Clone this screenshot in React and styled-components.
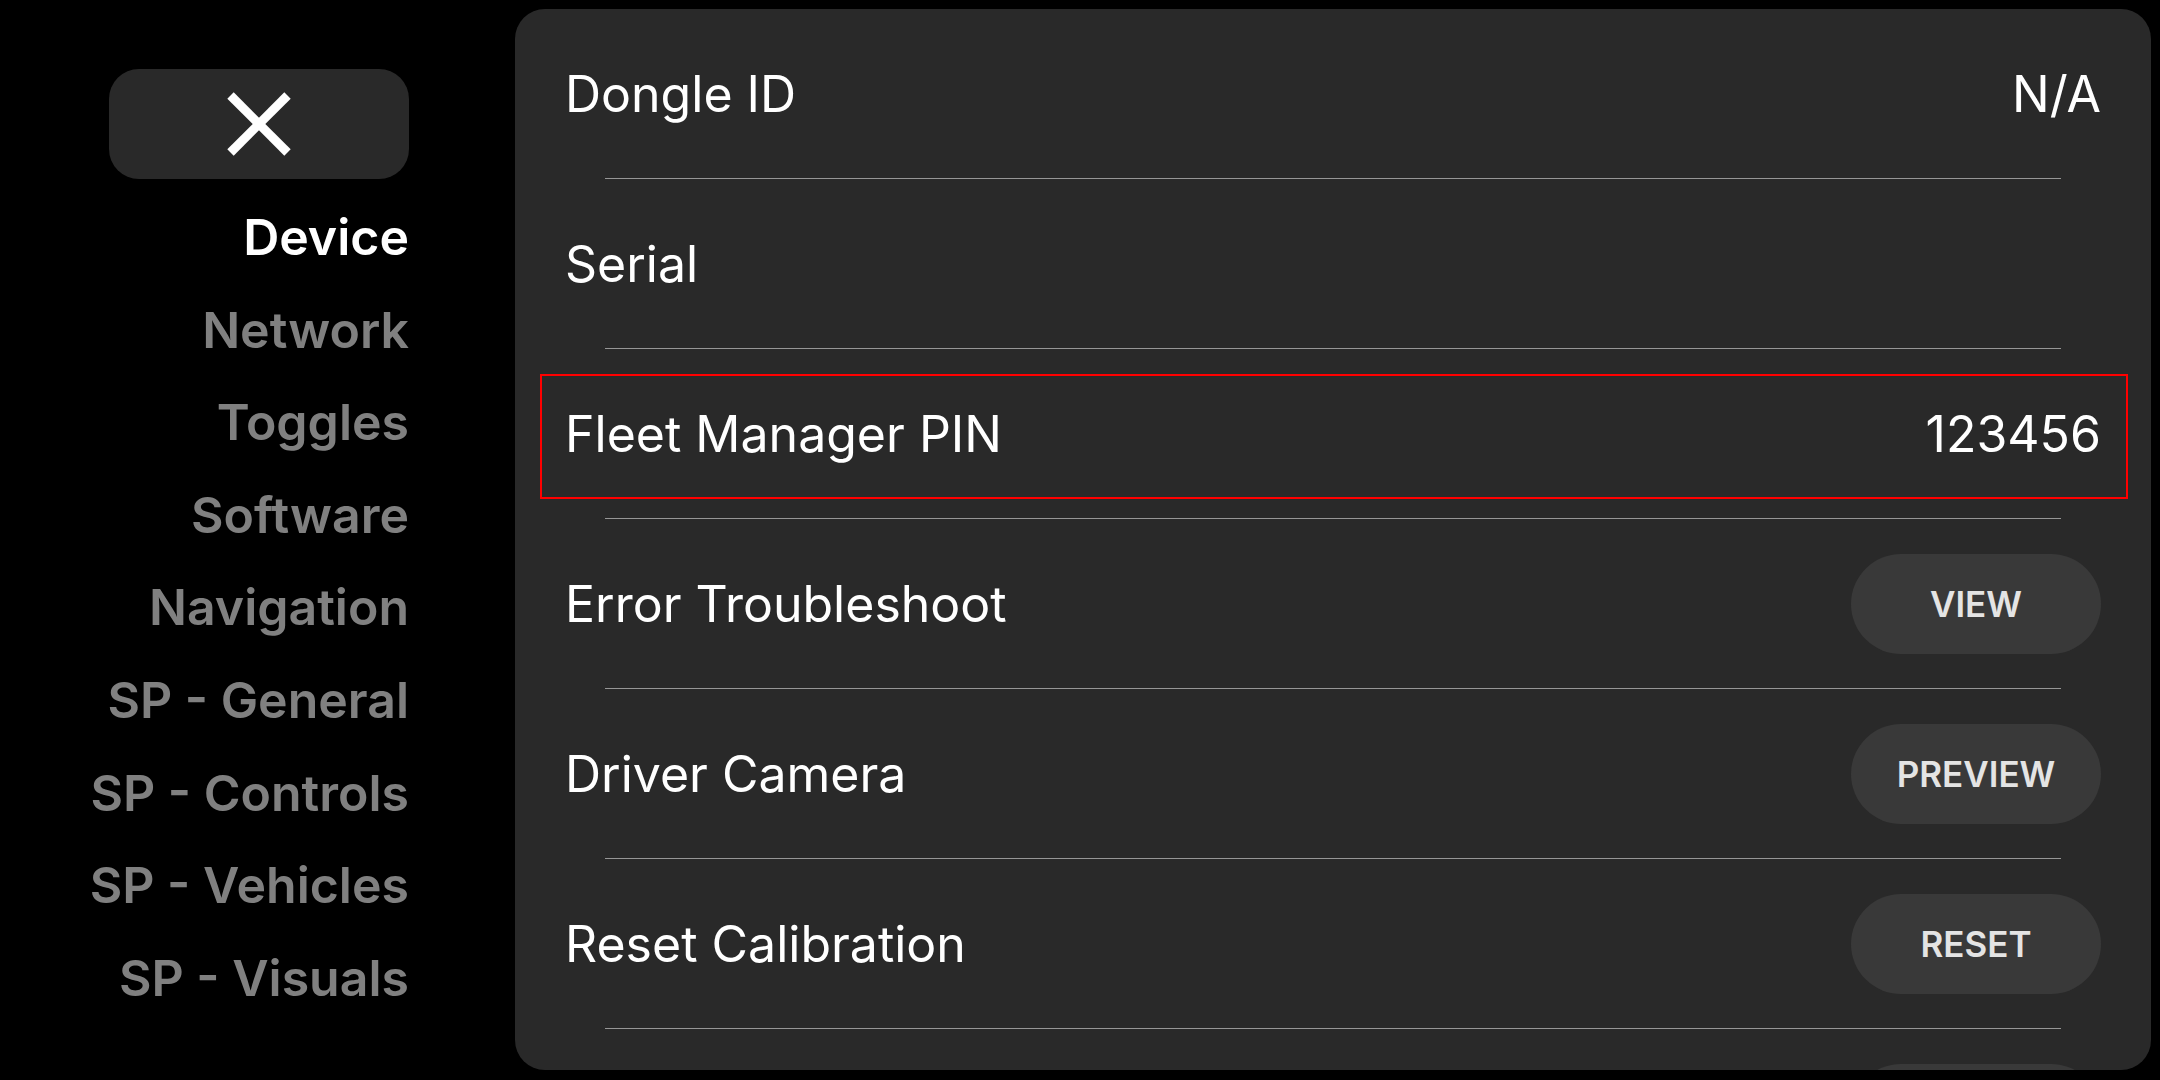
import React from "react";
import styled, { createGlobalStyle } from "styled-components";

const GlobalStyle = createGlobalStyle`
  *, *::before, *::after { box-sizing: border-box; }
  html, body {
    margin: 0;
    padding: 0;
    background: #000;
    width: 2160px;
    height: 1080px;
    overflow: hidden;
    font-family: Inter, "Noto Sans", "Liberation Sans", sans-serif;
  }
  #root { width: 2160px; height: 1080px; }
`;

const Screen = styled.div`
  display: flex;
  width: 2160px;
  height: 1080px;
  background: #000;
`;

const Sidebar = styled.nav`
  width: 515px;
  flex-shrink: 0;
  display: flex;
  flex-direction: column;
  align-items: flex-end;
  padding: 69px 106px 0 0;
`;

const CloseButton = styled.button`
  width: 300px;
  height: 110px;
  border: none;
  border-radius: 30px;
  background: #292929;
  display: flex;
  align-items: center;
  justify-content: center;
  padding: 0;
  margin-bottom: 12px;
  cursor: pointer;
`;

const NavList = styled.div`
  display: flex;
  flex-direction: column;
  align-items: flex-end;
`;

const NavItem = styled.div`
  height: 92.6px;
  line-height: 92.6px;
  font-size: 50px;
  font-weight: 600;
  color: ${(p) => (p.$active ? "#ffffff" : "#808080")};
  text-align: right;
  white-space: nowrap;
`;

const Panel = styled.main`
  flex: 1;
  margin: 9px 9px 10px 0;
  background: #292929;
  border-radius: 30px;
  overflow: hidden;
`;

const List = styled.div`
  display: flex;
  flex-direction: column;
  padding: 0 50px;
`;

const Row = styled.div`
  position: relative;
  height: 169px;
  flex-shrink: 0;
  display: flex;
  align-items: center;
  justify-content: space-between;

  ${(p) =>
    p.$highlight &&
    `
    &::after {
      content: "";
      position: absolute;
      left: -25px;
      right: -27px;
      top: 25px;
      height: 125px;
      border: 2px solid #ff0000;
      pointer-events: none;
    }
  `}
`;

const Label = styled.span`
  font-size: 50px;
  font-weight: 400;
  color: #ffffff;
  white-space: nowrap;
`;

const Value = styled.span`
  font-size: 50px;
  font-weight: 400;
  color: #ffffff;
  white-space: nowrap;
`;

const ActionButton = styled.button`
  width: 250px;
  height: 100px;
  border: none;
  border-radius: 50px;
  background: #393939;
  color: #e4e4e4;
  font-family: inherit;
  font-size: 35px;
  font-weight: 600;
  padding: 0;
  cursor: pointer;
`;

const Divider = styled.div`
  height: 1px;
  flex-shrink: 0;
  margin: 0 40px;
  background: #969696;
`;

const CloseIcon = () => (
  <svg width="64" height="64" viewBox="0 0 64 64" aria-hidden="true">
    <line x1="3.5" y1="3.5" x2="60.5" y2="60.5" stroke="#fff" strokeWidth="9" />
    <line x1="60.5" y1="3.5" x2="3.5" y2="60.5" stroke="#fff" strokeWidth="9" />
  </svg>
);

const navItems = [
  "Device",
  "Network",
  "Toggles",
  "Software",
  "Navigation",
  "SP - General",
  "SP - Controls",
  "SP - Vehicles",
  "SP - Visuals",
];

const rows = [
  { label: "Dongle ID", value: "N/A" },
  { label: "Serial", value: "" },
  { label: "Fleet Manager PIN", value: "123456", highlight: true },
  { label: "Error Troubleshoot", button: "VIEW" },
  { label: "Driver Camera", button: "PREVIEW" },
  { label: "Reset Calibration", button: "RESET" },
  { label: "Review Training Guide", button: "REVIEW" },
];

export default function App() {
  return (
    <>
      <GlobalStyle />
      <Screen>
        <Sidebar>
          <CloseButton aria-label="Close">
            <CloseIcon />
          </CloseButton>
          <NavList>
            {navItems.map((name, i) => (
              <NavItem key={name} $active={i === 0}>
                {name}
              </NavItem>
            ))}
          </NavList>
        </Sidebar>
        <Panel>
          <List>
            {rows.map((r) => (
              <React.Fragment key={r.label}>
                <Row $highlight={r.highlight}>
                  <Label>{r.label}</Label>
                  {r.button ? (
                    <ActionButton>{r.button}</ActionButton>
                  ) : (
                    <Value>{r.value}</Value>
                  )}
                </Row>
                <Divider />
              </React.Fragment>
            ))}
          </List>
        </Panel>
      </Screen>
    </>
  );
}
